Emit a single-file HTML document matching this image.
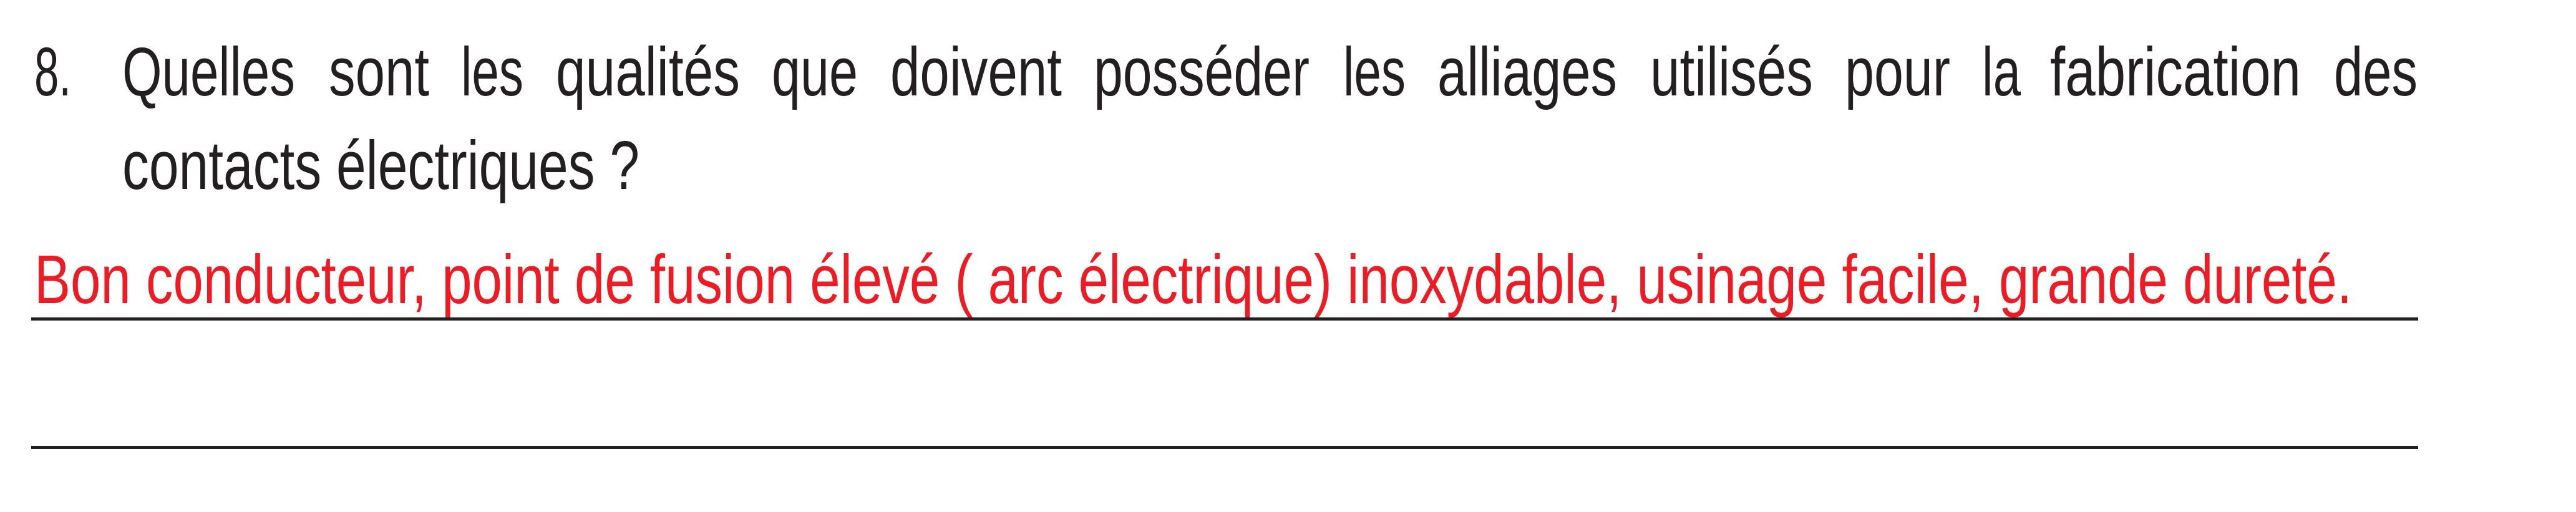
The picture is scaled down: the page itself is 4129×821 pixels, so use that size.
<!DOCTYPE html>
<html><head><meta charset="utf-8"><style>html,body{margin:0;padding:0;background:#fff;}svg{display:block}</style></head>
<body>
<svg width="4129" height="821" viewBox="0 0 4129 821" xmlns="http://www.w3.org/2000/svg">
<g font-family="'Liberation Sans', sans-serif" font-size="110" fill="#231f20">
<text x="55" y="153" textLength="59" lengthAdjust="spacingAndGlyphs">8.</text>
<text x="196" y="153" textLength="277" lengthAdjust="spacingAndGlyphs">Quelles</text>
<text x="527" y="153" textLength="161" lengthAdjust="spacingAndGlyphs">sont</text>
<text x="739" y="153" textLength="100" lengthAdjust="spacingAndGlyphs">les</text>
<text x="891" y="153" textLength="295" lengthAdjust="spacingAndGlyphs">qualités</text>
<text x="1237" y="153" textLength="138" lengthAdjust="spacingAndGlyphs">que</text>
<text x="1427" y="153" textLength="275" lengthAdjust="spacingAndGlyphs">doivent</text>
<text x="1753" y="153" textLength="346" lengthAdjust="spacingAndGlyphs">posséder</text>
<text x="2153" y="153" textLength="100" lengthAdjust="spacingAndGlyphs">les</text>
<text x="2304" y="153" textLength="288" lengthAdjust="spacingAndGlyphs">alliages</text>
<text x="2645" y="153" textLength="261" lengthAdjust="spacingAndGlyphs">utilisés</text>
<text x="2957" y="153" textLength="169" lengthAdjust="spacingAndGlyphs">pour</text>
<text x="3177" y="153" textLength="62" lengthAdjust="spacingAndGlyphs">la</text>
<text x="3286" y="153" textLength="402" lengthAdjust="spacingAndGlyphs">fabrication</text>
<text x="3741" y="153" textLength="134" lengthAdjust="spacingAndGlyphs">des</text>
<text x="196" y="303" textLength="829" lengthAdjust="spacingAndGlyphs">contacts électriques ?</text>
</g>
<text x="55" y="486" font-family="'Liberation Sans', sans-serif" font-size="110" fill="#ed1c24" textLength="3715" lengthAdjust="spacingAndGlyphs">Bon conducteur, point de fusion élevé ( arc électrique) inoxydable, usinage facile, grande dureté.</text>
<rect x="50" y="509" width="3826" height="5" fill="#231f20"/>
<rect x="50" y="715" width="3826" height="5" fill="#231f20"/>
</svg>
</body></html>
